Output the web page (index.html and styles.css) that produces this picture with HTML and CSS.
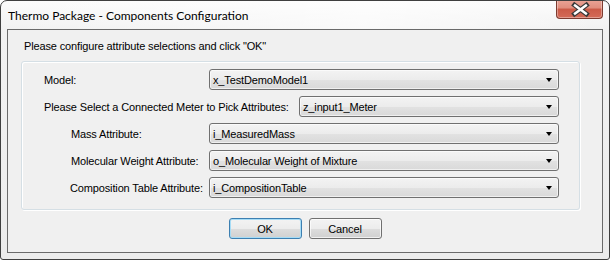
FILE: index.html
```html
<!DOCTYPE html>
<html>
<head>
<meta charset="utf-8">
<link rel="stylesheet" href="styles.css">
</head>
<body>
<div class="window">
  <div class="titlebar">
    <span class="title">Thermo Package - Components Configuration</span>
    <div class="close">
      <svg width="47" height="19" viewBox="0 0 47 19">
        <path d="M19 5 L31 14 M31 5 L19 14" stroke="#3a3a3a" stroke-width="5" stroke-linecap="square"/>
        <path d="M19.5 5.5 L30.5 13.5 M30.5 5.5 L19.5 13.5" stroke="#ffffff" stroke-width="2.6" stroke-linecap="square"/>
      </svg>
    </div>
  </div>
  <div class="client">
    <p class="prompt">Please configure attribute selections and click "OK"</p>
    <div class="group">
      <div class="row">
        <span class="label">Model:</span>
        <div class="combo"><span>x_TestDemoModel1</span><i class="arrow"></i></div>
      </div>
      <div class="row">
        <span class="label">Please Select a Connected Meter to Pick Attributes:</span>
        <div class="combo narrow"><span>z_input1_Meter</span><i class="arrow"></i></div>
      </div>
      <div class="row indent">
        <span class="label">Mass Attribute:</span>
        <div class="combo"><span>i_MeasuredMass</span><i class="arrow"></i></div>
      </div>
      <div class="row indent">
        <span class="label">Molecular Weight Attribute:</span>
        <div class="combo"><span>o_Molecular Weight of Mixture</span><i class="arrow"></i></div>
      </div>
      <div class="row indent2">
        <span class="label">Composition Table Attribute:</span>
        <div class="combo"><span>i_CompositionTable</span><i class="arrow"></i></div>
      </div>
    </div>
    <div class="buttons">
      <button class="btn ok">OK</button>
      <button class="btn">Cancel</button>
    </div>
  </div>
</div>
</body>
</html>
```
FILE: styles.css
```css
html, body {
  margin: 0;
  padding: 0;
  background: #ffffff;
}

.window {
  box-sizing: border-box;
  width: 610px;
  height: 260px;
  border: 1px solid #3f3f3f;
  border-radius: 7px 7px 3px 3px;
  padding: 0 6px 6px 6px;
  background: linear-gradient(180deg, #fbfbfb 0%, #f1f1f1 12%, #ececec 100%);
  display: flex;
  flex-direction: column;
  overflow: hidden;
}

.titlebar {
  height: 28px;
  display: flex;
  align-items: flex-start;
  background: linear-gradient(100deg, rgba(255,255,255,0) 0%, rgba(255,255,255,0.6) 60%, rgba(255,255,255,0) 100%);
}

.title {
  font-family: Lato, "Open Sans", sans-serif;
  font-size: 12px;
  line-height: 29px;
  color: #000000;
  padding-left: 1px;
}

.close {
  margin-left: auto;
  margin-top: -1px;
  width: 47px;
  height: 19px;
  box-sizing: border-box;
  border: 1px solid #7d3b30;
  border-top: none;
  border-radius: 0 0 4px 4px;
  background: linear-gradient(180deg, #eaa497 0%, #e08d7d 45%, #cb5a47 50%, #d46b58 100%);
  box-shadow: inset 0 0 0 1px rgba(255,255,255,0.35);
  display: flex;
}

.close svg {
  margin-left: -1px;
}

.client {
  flex: 1;
  border: 1px solid #6a6a6a;
  background: #f0f0f0;
  padding: 10px 0 0 0;
  font-family: "Liberation Sans", Arial, sans-serif;
  font-size: 11px;
  letter-spacing: -0.14px;
  color: #000000;
}

.prompt {
  margin: 0;
  padding-left: 16px;
  line-height: 13px;
}

.group {
  margin: 8px 22px 0 13px;
  border: 1px solid #d5dfe5;
  border-radius: 3px;
  box-shadow: inset 1px 1px 0 #ffffff, 1px 1px 0 #ffffff;
  padding: 7px 20px 11px 22px;
  display: flex;
  flex-direction: column;
  gap: 6px;
}

.row {
  display: flex;
  align-items: center;
  justify-content: space-between;
  height: 21px;
}

.row.indent {
  padding-left: 27px;
}

.row.indent2 {
  padding-left: 26px;
}

.combo {
  box-sizing: border-box;
  width: 350px;
  height: 21px;
  border: 1px solid #707070;
  border-radius: 3px;
  background: linear-gradient(180deg, #f3f3f3 0%, #ececec 50%, #e2e2e2 51%, #d9d9d9 100%);
  box-shadow: inset 0 0 0 1px rgba(255,255,255,0.6);
  display: flex;
  align-items: center;
  padding: 0 6px 0 3px;
}

.combo.narrow {
  width: 260px;
}

.combo span {
  flex: 1;
}

.arrow {
  width: 0;
  height: 0;
  border-left: 3.5px solid transparent;
  border-right: 3.5px solid transparent;
  border-top: 4px solid #000000;
  margin-top: 1px;
}

.buttons {
  margin-top: 8px;
  display: flex;
  justify-content: center;
  gap: 7px;
}

.btn {
  box-sizing: border-box;
  width: 73px;
  height: 21px;
  margin: 0;
  border: 1px solid #707070;
  border-radius: 3px;
  background: linear-gradient(180deg, #f3f3f3 0%, #ececec 50%, #dddddd 51%, #d0d0d0 100%);
  box-shadow: inset 0 0 0 1px rgba(255,255,255,0.7);
  font-family: "Liberation Sans", Arial, sans-serif;
  font-size: 11px;
  letter-spacing: -0.14px;
  color: #000000;
  padding: 0;
}

.btn.ok {
  border-color: #3c7fb1;
  box-shadow: inset 0 0 0 1px #a6dcf6;
}
```
